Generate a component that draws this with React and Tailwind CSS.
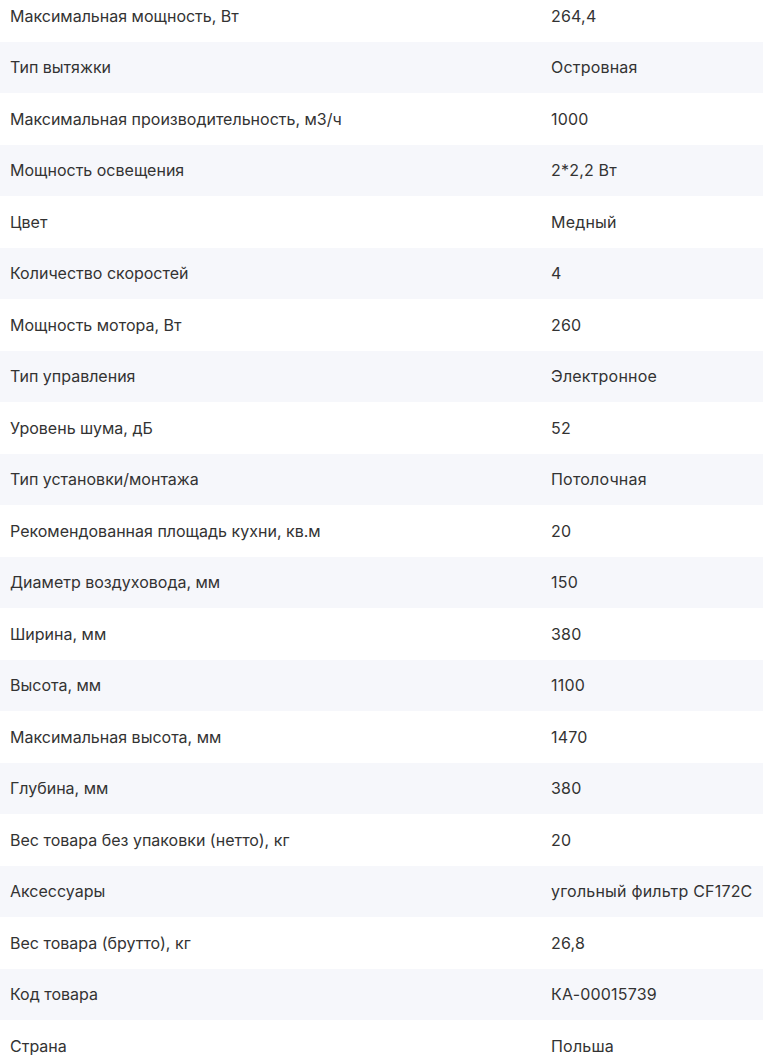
import React from 'react';

const rows = [
  ['Максимальная мощность, Вт', '264,4'],
  ['Тип вытяжки', 'Островная'],
  ['Максимальная производительность, м3/ч', '1000'],
  ['Мощность освещения', '2*2,2 Вт'],
  ['Цвет', 'Медный'],
  ['Количество скоростей', '4'],
  ['Мощность мотора, Вт', '260'],
  ['Тип управления', 'Электронное'],
  ['Уровень шума, дБ', '52'],
  ['Тип установки/монтажа', 'Потолочная'],
  ['Рекомендованная площадь кухни, кв.м', '20'],
  ['Диаметр воздуховода, мм', '150'],
  ['Ширина, мм', '380'],
  ['Высота, мм', '1100'],
  ['Максимальная высота, мм', '1470'],
  ['Глубина, мм', '380'],
  ['Вес товара без упаковки (нетто), кг', '20'],
  ['Аксессуары', 'угольный фильтр CF172C'],
  ['Вес товара (брутто), кг', '26,8'],
  ['Код товара', 'КА-00015739'],
  ['Страна', 'Польша']
];

const App = () => {
  return (
    <div className="h-[1062px] overflow-hidden bg-white font-['Inter',sans-serif] text-[16px] text-[#333]">
      <div className="-mt-[10px]">
        {rows.map(([name, value], i) => (
          <div
            key={name}
            className={`flex h-[51.5px] items-center ${i % 2 === 1 ? 'bg-[#f6f7fb]' : 'bg-white'}`}
          >
            <div className="w-[551px] shrink-0 pl-[10px]">{name}</div>
            <div className="whitespace-nowrap tracking-[0.2px]">{value}</div>
          </div>
        ))}
      </div>
    </div>
  );
};

export default App;
